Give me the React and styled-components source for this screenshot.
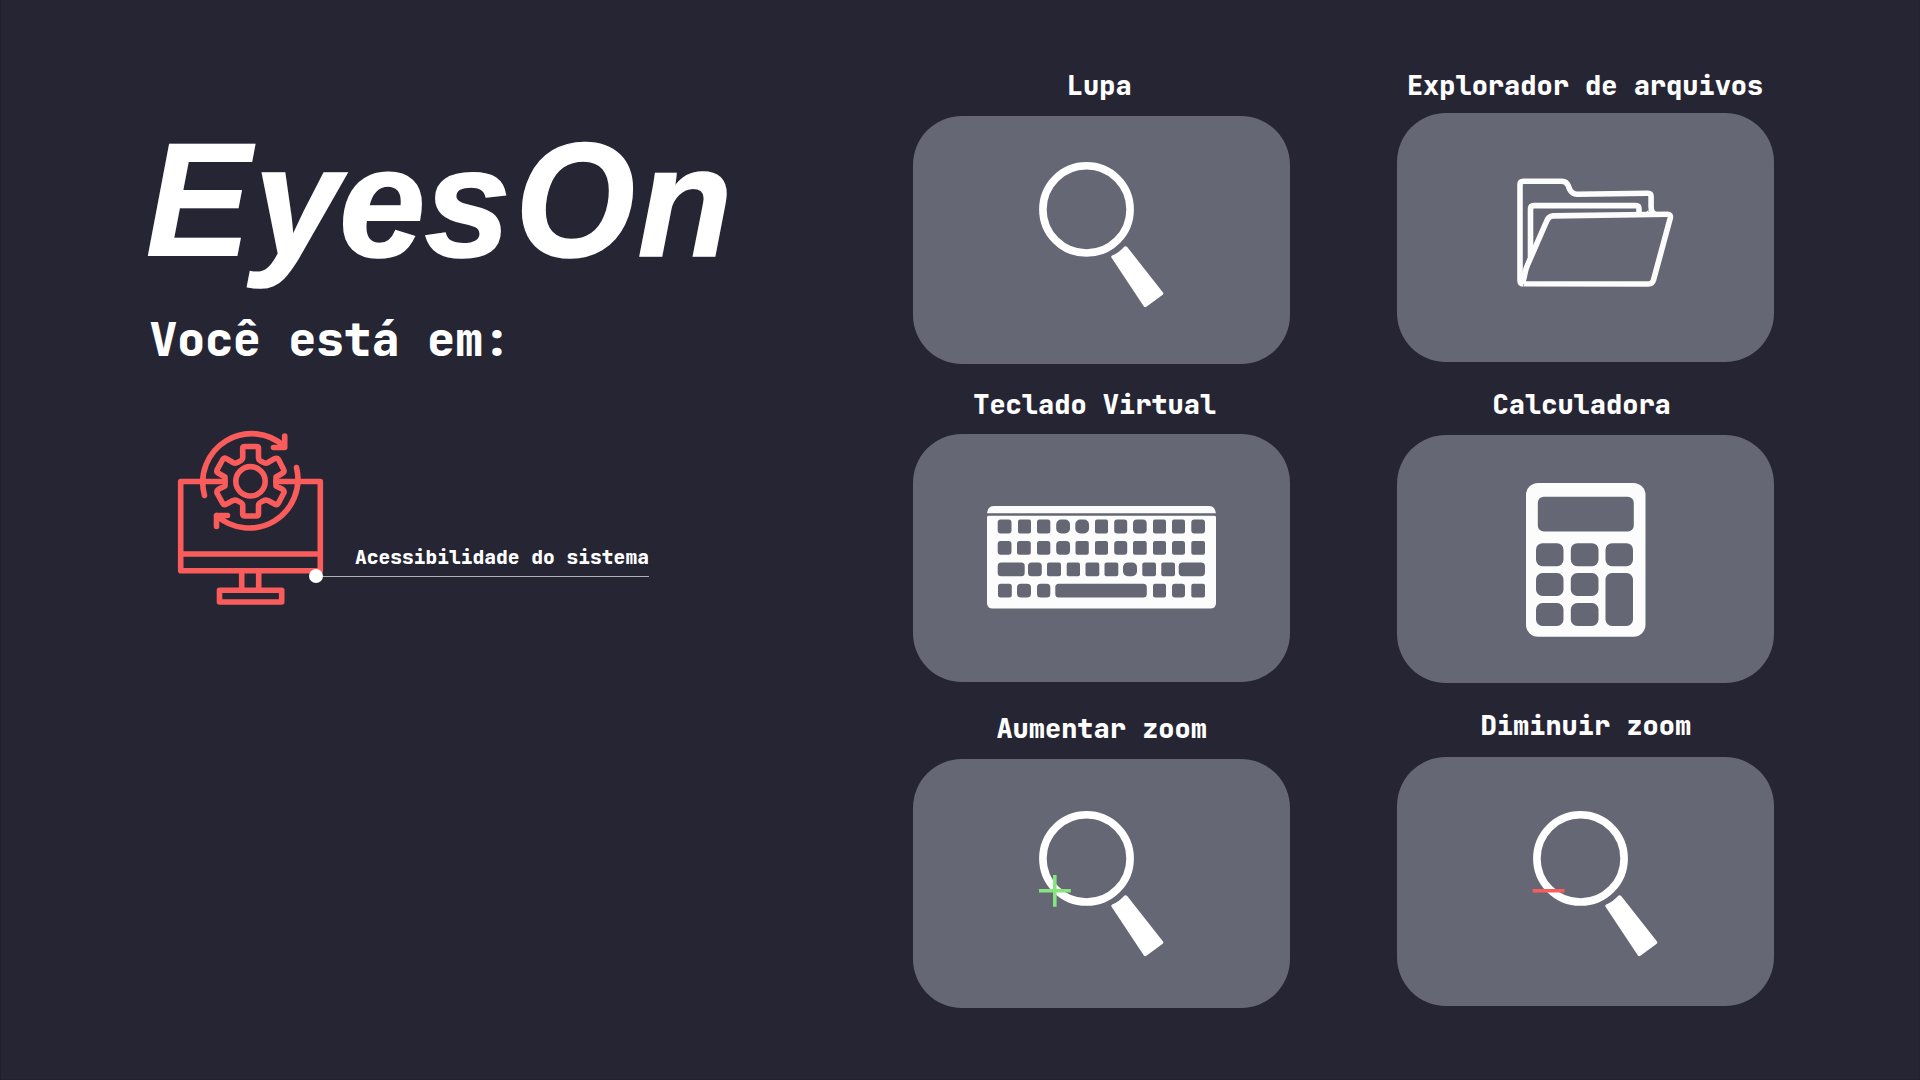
import React from "react";
import styled, { createGlobalStyle } from "styled-components";

const GlobalStyle = createGlobalStyle`
  * { box-sizing: border-box; }
  body { margin: 0; background: #262534; }
`;

const Screen = styled.main`
  display: flex;
  width: 1920px;
  height: 1080px;
  overflow: hidden;
  background: #262534;
  box-shadow: inset 1px 0 0 #1f1e2c, inset -1px -1px 0 #232230;
  color: #ffffff;
  font-family: "JetBrains Mono", "DejaVu Sans Mono", monospace;
  font-weight: 800;
`;

const Intro = styled.section`
  display: flex;
  flex-direction: column;
  width: 913.2px;
  padding: 100px 0 0 144.8px;
`;

const Brand = styled.h1`
  height: 200px;
  margin: 0;
  font: italic 700 164px/200px "Liberation Sans", Arial, sans-serif;
  white-space: nowrap;
`;

const Initial = styled.span`
  display: inline-block;
  margin-right: -0.3px;
  transform: scaleX(0.975);
  transform-origin: left;
`;

const Lower = styled.span`
  font-size: 155.4px;
  letter-spacing: ${(p) => p.$tracking || 0}px;
  -webkit-text-stroke: 1.6px #ffffff;
`;

const Round = styled.span`
  display: inline-block;
  margin: 0 -5px 0 5.5px;
  transform: scaleX(0.94);
  transform-origin: left;
  -webkit-text-stroke: 1.4px #ffffff;
`;

const Lead = styled.p`
  margin: 9.5px 0 0 4.8px;
  font-size: 46.3px;
  line-height: 60px;
  white-space: pre;
`;

const Location = styled.div`
  display: flex;
  align-items: flex-start;
  margin: 58.4px 0 0 31.2px;
`;

const SystemIcon = styled.svg`
  flex: none;
  width: 152px;
  height: 178px;
`;

const Callout = styled.div`
  display: flex;
  flex-direction: column;
  width: 340px;
  margin: 116.9px 0 0 -19px;
`;

const Place = styled.span`
  padding-left: 46px;
  font-size: 19.6px;
  line-height: 24px;
  white-space: pre;
`;

const Pointer = styled.div`
  display: flex;
  align-items: center;
  height: 15px;
`;

const Dot = styled.span`
  flex: none;
  width: 14px;
  height: 14px;
  border-radius: 50%;
  background: #ffffff;
`;

const Rule = styled.span`
  flex: 1;
  height: 1px;
  background: #b2b1b8;
`;

const Columns = styled.section`
  display: flex;
  gap: 106.4px;
`;

const Column = styled.div`
  display: flex;
  flex-direction: column;
  width: 377px;
`;

const Tile = styled.article`
  display: flex;
  flex-direction: column;
  padding-top: ${(p) => p.$top}px;
`;

const Label = styled.h2`
  margin: 0;
  padding-left: ${(p) => p.$indent}px;
  font-size: 27px;
  font-weight: 800;
  line-height: 32px;
  white-space: pre;
`;

const Card = styled.button`
  display: flex;
  align-items: flex-start;
  width: 377.2px;
  height: 248.7px;
  margin: ${(p) => p.$gap}px 0 0;
  padding: ${(p) => p.$pad};
  border: 0;
  border-radius: 49px;
  background: #666774;
`;

const Glyph = styled.svg`
  flex: none;
  display: block;
  overflow: visible;
`;

function Magnifier({ sign }) {
  return (
    <Glyph width="125" height="146" viewBox="0 0 125 146">
      <circle cx="47.5" cy="47.4" r="43.6" fill="none" stroke="#fff" strokeWidth="7.6" />
      <path
        d="M73.2 93.6Q80.3 90.6 85.2 84.8Q86.8 83.4 88.2 85L124 130.6Q125 131.8 123.7 132.8L107.4 144.8Q106 145.7 104.9 144.4L72.4 95.6Q71.8 94.2 73.2 93.6Z"
        fill="#fff"
      />
      {sign && (
        <path
          d={sign === "plus" ? "M0 79.7H31.8M15.8 64V95.7" : "M-.3 79.7H31.5"}
          fill="none"
          stroke={sign === "plus" ? "#86e57f" : "#f95c5a"}
          strokeWidth="3.6"
        />
      )}
    </Glyph>
  );
}

function Folder() {
  return (
    <Glyph width="157" height="110" viewBox="0 0 157 110" fill="none" stroke="#fcfcfc" strokeWidth="5.6" strokeLinejoin="round">
      <path d="M6 106Q3 106 3 102V6.5Q3 3.2 6.5 3.2H45Q49.5 3.2 51.2 7.5L52.6 11.3Q55 16 60 16.3L131 15.3Q134.1 15.3 134.1 18.5V29Q134.2 35.7 139 36.3" />
      <path d="M13.5 79V31Q13.5 27.6 17 27.6H119Q122 27.6 122 31V36" />
      <path d="M5 105C8 101 7 94 10.5 87L29.5 43.5Q31.3 38.3 36 37.9L150.5 36.3Q154 36.3 153.3 40L136.5 102Q135.3 106 131.5 106L6.5 105.8" />
      <path d="M124 33.5Q127.5 36.5 131.5 32V37H124ZM4.5 98L10.7 86V80H13L10 90L7 102Z" fill="#fcfcfc" stroke="none" />
    </Glyph>
  );
}

const KEY_ROWS = [
  [
    [10.7, 13.8, 3], [31, 13, 2], [50, 13.3, 2.5], [69.2, 13.8, 5], [88.3, 13.7, 5], [108, 13, 2], [127.2, 13, 3], [146, 13.7, 4], [166, 13, 2], [185, 13, 2], [204.3, 13.7, 3],
  ],
  [
    [10.7, 13.8, 3], [30, 13.8, 2.5], [50, 13.3, 2.5], [69.2, 13.8, 4], [88.5, 13.3, 2], [108, 13, 2], [127.2, 13, 3], [146, 13.7, 2], [166, 13, 2], [185, 13, 2.5], [204.3, 13.7, 2],
  ],
  [
    [10.7, 27, 3.5], [41, 13.8, 3.5], [60, 14, 2], [79.7, 13.3, 2], [98.5, 13.8, 2], [117.5, 13.8, 2], [136, 14, 5], [155.3, 13.7, 2], [174.3, 13.7, 2], [191.7, 26.3, 4],
  ],
  [
    [11, 13.8, 2.5], [30, 14, 4], [50, 13.3, 3.5], [68.3, 91.5, 3.5], [166, 13, 2], [185, 13, 3], [204.3, 13.7, 2],
  ],
];

function Keyboard() {
  return (
    <Glyph width="229" height="103" viewBox="0 0 229 103">
      <path d="M0 7.3Q.8 0 7 0H222Q228 0 228.9 7.3Z" fill="#fcfcfc" />
      <path d="M0 11Q0 9.7 2 9.7H227Q229 9.7 229 11V97Q229 102.6 223 102.6H6Q0 102.6 0 97Z" fill="#fcfcfc" />
      {KEY_ROWS.map((row, r) =>
        row.map(([x, w, radius]) => (
          <rect key={`${r}-${x}`} x={x} y={13.6 + r * 21.4} width={w} height="13.8" rx={radius} fill="#666774" />
        ))
      )}
    </Glyph>
  );
}

const CALC_KEYS = [
  [11.8, 14, 96, 34.8, 6],
  [10, 60.5, 27.5, 23, 6.5], [44.8, 60.5, 27.7, 23, 6.5], [79.5, 60.5, 27.5, 23, 6.5],
  [10, 90.3, 27.5, 23, 6.5], [44.8, 90.3, 27.7, 23, 6.5], [79.5, 90.3, 27.5, 53, 6.5],
  [10, 120.3, 27.5, 23, 6.5], [44.8, 120.3, 27.7, 23, 6.5],
];

function Calculator() {
  return (
    <Glyph width="120" height="154" viewBox="0 0 120 154">
      <rect width="119.5" height="153.8" rx="12" fill="#fcfcfc" />
      {CALC_KEYS.map(([x, y, w, h, radius]) => (
        <rect key={`${x}-${y}`} x={x} y={y - 0.3} width={w} height={h} rx={radius} fill="#666774" />
      ))}
    </Glyph>
  );
}

function Monitor() {
  return (
    <SystemIcon viewBox="176 428 152 178" fill="none" stroke="#f95c5a" strokeWidth="5.6" strokeLinecap="round" strokeLinejoin="round">
      <path d="M225 481.5H180.7V570.7H320.3V481.5H276M181 554H320" />
      <path d="M241.7 573V588M258.7 573V588M219.5 590.2H281.7V602H219.5Z" />
      <circle cx="250.5" cy="481.3" r="14.7" />
      <path d="M242.7 448V458C242.7 460 240.5 461 237.5 462.5Q235.5 463.8 233 462.5L226.5 458.7Q224 457.5 222.7 459.5L217.3 469.3Q216 472 218.5 473.3L225 477V486L218.5 489.3Q216 491 217.3 493.5L222.5 503Q224 505.5 226.5 504L233 500.5Q235.5 499.5 237.5 500.8C240.5 502.3 242.7 503 242.7 505V514Q242.7 516 245 516H256.2Q258.5 516 258.5 514V505C258.5 503 260.5 502.3 263.5 500.8Q265.5 499.5 268 500.5L274.5 504Q277 505.5 278.5 503L283.5 493.5Q285 491 282.5 489.3L276 486V477L282.5 473.3Q285 472 283.5 469.3L278.5 459.5Q277 457.5 274.5 458.7L268 462.5Q265.5 463.8 263.5 462.5C260.5 461 258.5 460 258.5 458V448Q258.5 446.5 256.2 446.5H245Q242.7 446.5 242.7 448Z" />
      <path d="M204.5 495.5A48.8 48.8 0 0 1 284.5 446.5M273.5 447.5H284.7V436" />
      <path d="M296.5 467.5A48.8 48.8 0 0 1 216.5 515.5M216.5 526.5V515.5H227.5" />
    </SystemIcon>
  );
}

export default function App() {
  return (
    <>
      <GlobalStyle />
      <Screen>
        <Intro>
          <Brand>
            <Initial>E</Initial><Lower $tracking={-1.2}>yes</Lower><Round>O</Round><Lower>n</Lower>
          </Brand>
          <Lead>Você está em:</Lead>
          <Location>
            <Monitor />
            <Callout>
              <Place>Acessibilidade do sistema</Place>
              <Pointer>
                <Dot />
                <Rule />
              </Pointer>
            </Callout>
          </Location>
        </Intro>
        <Columns>
          <Column>
            <Tile $top={69.2}>
              <Label $indent={153.6}>Lupa</Label>
              <Card $gap={14.4} $pad="46.4px 0 0 126px"><Magnifier /></Card>
            </Tile>
            <Tile $top={23.7}>
              <Label $indent={60}>Teclado Virtual</Label>
              <Card $gap={13.7} $pad="71.9px 0 0 74px"><Keyboard /></Card>
            </Tile>
            <Tile $top={29.5}>
              <Label $indent={83.2}>Aumentar zoom</Label>
              <Card $gap={15.2} $pad="51.6px 0 0 126px"><Magnifier sign="plus" /></Card>
            </Tile>
          </Column>
          <Column>
            <Tile $top={69.2}>
              <Label $indent={10.3}>Explorador de arquivos</Label>
              <Card $gap={12.3} $pad="64.2px 0 0 120.4px"><Folder /></Card>
            </Tile>
            <Tile $top={25.6}>
              <Label $indent={96}>Calculadora</Label>
              <Card $gap={14.9} $pad="48.4px 0 0 129.7px"><Calculator /></Card>
            </Tile>
            <Tile $top={25.6}>
              <Label $indent={84}>Diminuir zoom</Label>
              <Card $gap={15.9} $pad="54.1px 0 0 136.9px"><Magnifier sign="minus" /></Card>
            </Tile>
          </Column>
        </Columns>
      </Screen>
    </>
  );
}
